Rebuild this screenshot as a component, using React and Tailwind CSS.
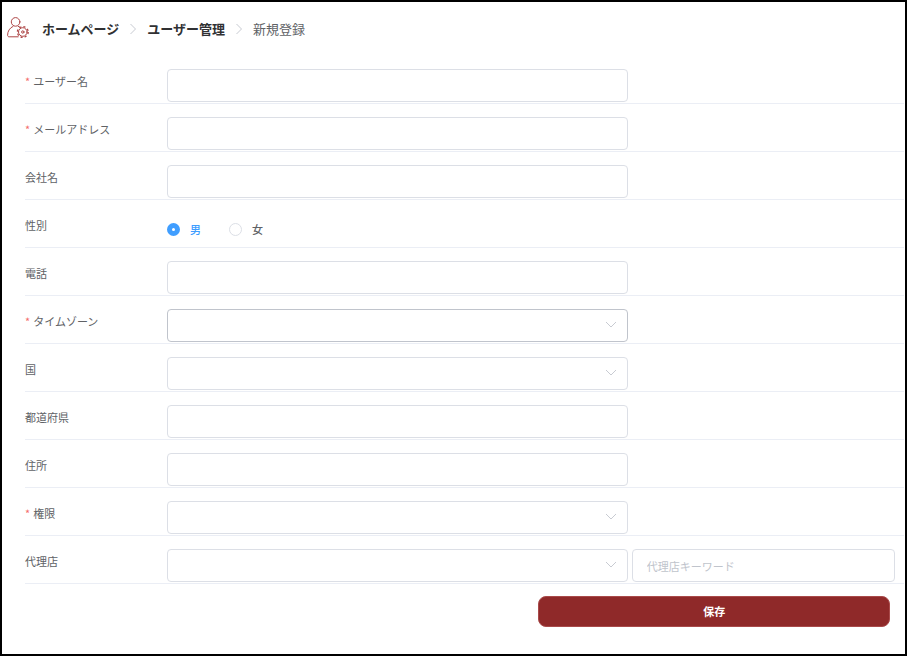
import React, { useState } from "react";

const FIELDS = [
  { name: "username", label: "ユーザー名", required: true, type: "text" },
  { name: "email", label: "メールアドレス", required: true, type: "text" },
  { name: "company", label: "会社名", type: "text" },
  { name: "gender", label: "性別", type: "radio" },
  { name: "phone", label: "電話", type: "text" },
  { name: "timezone", label: "タイムゾーン", required: true, type: "select", active: true },
  { name: "country", label: "国", type: "select" },
  { name: "prefecture", label: "都道府県", type: "text" },
  { name: "address", label: "住所", type: "text" },
  { name: "role", label: "権限", required: true, type: "select" },
  { name: "agency", label: "代理店", type: "select", keyword: true },
];

const GENDERS = [
  { value: "male", label: "男" },
  { value: "female", label: "女" },
];

const inputClass =
  "block w-full h-[33px] rounded border border-[#dcdfe6] bg-white px-3.5 text-[11px] text-[#606266] placeholder:text-[#c0c4cc] outline-none focus:border-[#409eff]";

const UserGearIcon = () => (
  <svg width="23" height="24" viewBox="0 0 23 24" fill="none" stroke="#ad4545" strokeLinecap="round" strokeLinejoin="round" aria-hidden="true">
    <circle cx="8.6" cy="4.9" r="4.3" />
    <path d="M11.2 19.8H2.2C1.2 19.8.6 19.2.6 18.2C.6 14.2 2.6 11 6 9.4M11.3 9.4C12 9.6 12.6 9.9 13.1 10.3" />
    <circle cx="15.8" cy="15" r="4.3" />
    <circle cx="15.8" cy="15" r="5.4" strokeWidth="1.3" strokeDasharray="2.1 2.14" strokeLinecap="butt" />
    <circle cx="15.8" cy="15" r="1.2" />
  </svg>
);

const Separator = () => (
  <svg className="mx-2.5 shrink-0" width="8" height="12" viewBox="0 0 8 12" fill="none" stroke="#c8cbd2" aria-hidden="true">
    <path d="M1.5 1L6.5 6L1.5 11" />
  </svg>
);

const SelectField = ({ id, active }) => (
  <div className="relative">
    <select
      id={id}
      className={
        active
          ? "block w-full h-[33px] appearance-none rounded border border-[#c0c4cc] bg-white px-3.5 text-[11px] text-[#606266] outline-none"
          : "block w-full h-[33px] appearance-none rounded border border-[#dcdfe6] bg-white px-3.5 text-[11px] text-[#606266] outline-none"
      }
    >
      <option value=""></option>
    </select>
    <svg
      className="pointer-events-none absolute right-[11px] top-3"
      width="12"
      height="7"
      viewBox="0 0 12 7"
      fill="none"
      stroke="#c8cbd2"
      aria-hidden="true"
    >
      <path d="M1 1L6 6L11 1" />
    </svg>
  </div>
);

const GenderField = ({ value, onChange }) => (
  <div className="flex items-center gap-7 h-8">
    {GENDERS.map((g) => (
      <label
        key={g.value}
        className={
          value === g.value
            ? "flex items-center gap-2.5 font-medium text-[#409eff]"
            : "flex items-center gap-2.5 font-medium text-[#606266]"
        }
      >
        <input
          type="radio"
          name="gender"
          value={g.value}
          checked={value === g.value}
          onChange={() => onChange(g.value)}
          className="size-[13px] appearance-none rounded-full border border-[#dcdfe6] bg-white checked:border-[5px] checked:border-[#409eff]"
        />
        {g.label}
      </label>
    ))}
  </div>
);

const App = () => {
  const [gender, setGender] = useState("male");

  return (
    <div
      lang="ja"
      className="min-h-screen border-2 border-black bg-white mr-px text-[11px] text-[#606266] font-['Noto_Sans_CJK_JP',sans-serif]"
    >
      {/* BREADCRUMB */}
      <nav className="flex items-center h-[54px] pl-[5px] text-[13px]">
        <UserGearIcon />
        <a href="#home" className="ml-3 font-bold text-[#303133]">ホームページ</a>
        <Separator />
        <a href="#users" className="font-bold text-[#303133]">ユーザー管理</a>
        <Separator />
        <span>新規登録</span>
      </nav>

      {/* FORM */}
      <form className="pl-[23px] pr-px" onSubmit={(e) => e.preventDefault()}>
        {FIELDS.map((field) => (
          <div
            key={field.name}
            className="grid grid-cols-[138px_7fr_4fr] gap-x-1 h-12 pt-[13px] pr-[9px] border-b border-[#ebeef5]"
          >
            {field.type === "radio" ? (
              <span className="leading-6">{field.label}</span>
            ) : (
              <label htmlFor={field.name} className="leading-6">
                {field.required && <span className="mr-[3px] text-[#f56c6c]">*</span>}
                {field.label}
              </label>
            )}

            {field.type === "text" && <input id={field.name} type="text" className={inputClass} />}
            {field.type === "select" && <SelectField id={field.name} active={field.active} />}
            {field.type === "radio" && <GenderField value={gender} onChange={setGender} />}

            {field.keyword && (
              <input
                type="text"
                aria-label="代理店キーワード"
                placeholder="代理店キーワード"
                className={inputClass}
              />
            )}
          </div>
        ))}

        {/* SAVE */}
        <div className="flex justify-end pt-3">
          <button
            type="submit"
            className="w-2/5 h-[31px] mr-3.5 rounded-lg border border-[#a94a4a] bg-[#8f2929] font-bold text-white"
          >
            保存
          </button>
        </div>
      </form>
    </div>
  );
};

export default App;
